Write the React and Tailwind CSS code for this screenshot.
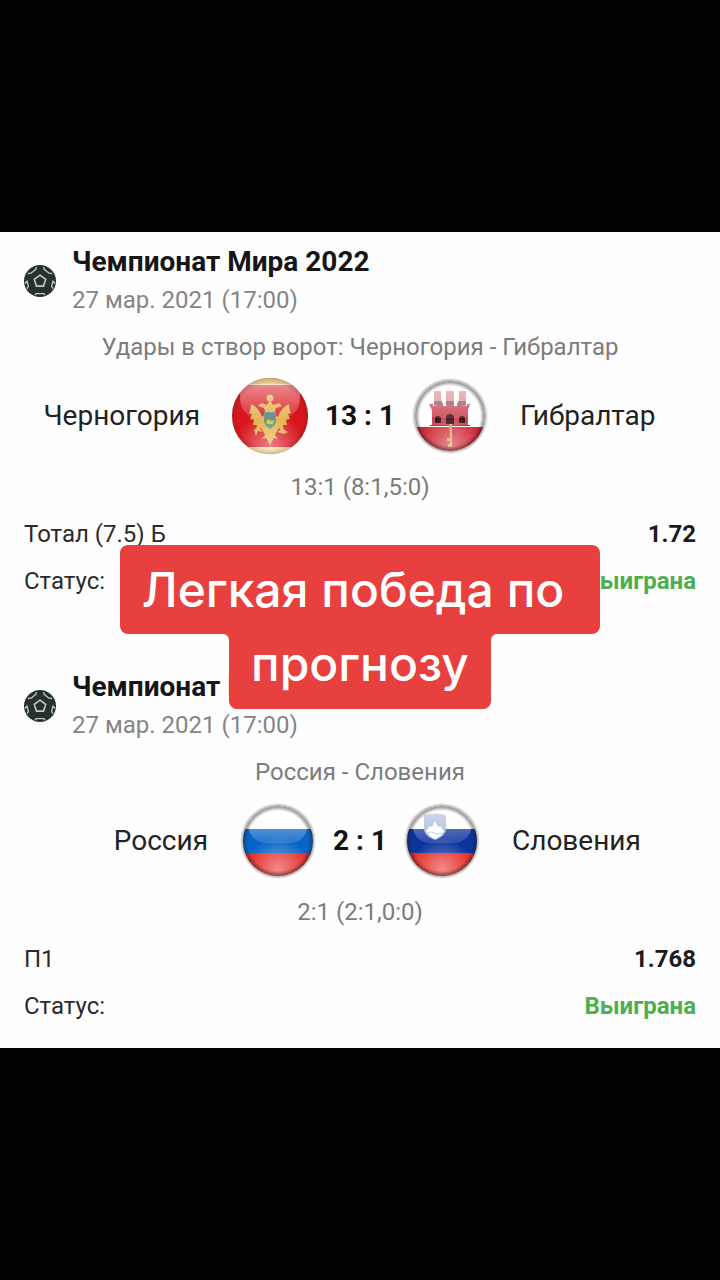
import React from 'react';

const matches = [
  {
    id: 1,
    league: 'Чемпионат Мира 2022',
    date: '27 мар. 2021 (17:00)',
    market: 'Удары в створ ворот: Черногория - Гибралтар',
    home: 'Черногория',
    away: 'Гибралтар',
    homeFlag: 'me',
    awayFlag: 'gi',
    score: '13 : 1',
    details: '13:1 (8:1,5:0)',
    bet: 'Тотал (7.5) Б',
    odds: '1.72',
    status: 'Выиграна',
  },
  {
    id: 2,
    league: 'Чемпионат Мира 2022',
    date: '27 мар. 2021 (17:00)',
    market: 'Россия - Словения',
    home: 'Россия',
    away: 'Словения',
    homeFlag: 'ru',
    awayFlag: 'si',
    score: '2 : 1',
    details: '2:1 (2:1,0:0)',
    bet: 'П1',
    odds: '1.768',
    status: 'Выиграна',
  },
];

const BallIcon = () => (
  <svg viewBox="0 0 32 32" className="w-8 h-8 shrink-0" aria-hidden="true">
    <circle cx="16" cy="16" r="16" fill="#25302f" />
    <g fill="none" stroke="#c3cbc9" strokeWidth="1.3">
      <path d="M16 10.2l5.7 4.2-2.2 6.7h-7l-2.2-6.7z" strokeWidth="1.6" />
      <path d="M4 8.5l3-.3 4.6-3.6.9-2.6M28 8.5l-3-.3-4.6-3.6-.9-2.6" />
      <path d="M1 18.5l2-2.3 1.4 5.2-1.4 2.2M31 18.5l-2-2.3-1.4 5.2 1.4 2.2" />
      <path d="M11 30l1.2-1.4h7.6L21 30" />
    </g>
  </svg>
);

const MontenegroFlag = () => (
  <>
    <rect width="80" height="80" fill="#d8161f" />
    <rect width="80" height="9" fill="#ead08c" />
    <rect y="71" width="80" height="9" fill="#f3dc8e" />
    <g fill="#e3b04a">
      <path d="M40 24l-3 5-6-2-3 3 6 2 2 6-4 3c-2-6-5-10-11-13 0 4-1 6-2 9l3 1-2 5 4 1-1 5 4 0-1 6 5-3 2 3 2 4-3 4 4-1 4 7 4-7 4 1-3-4 2-4 2-3 5 3-1-6 4 0-1-5 4-1-2-5 3-1c-1-3-2-5-2-9-6 3-9 7-11 13l-4-3 2-6 6-2-3-3-6 2z" />
      <circle cx="40" cy="22" r="3.5" />
      <path d="M24 54l4-3 5 5-5-1-2 5zM56 55l-4-3-5 4 7 2 4-2z" />
    </g>
    <path d="M34 36h12v8c0 5-3 7-6 9-3-2-6-4-6-9z" fill="#58936a" />
    <path d="M35 37h10v5H35z" fill="#54718d" />
    <path d="M36 45l3-2 2 2 3-1-1 4h-6z" fill="#d9b751" />
  </>
);

const GibraltarFlag = () => (
  <>
    <rect width="80" height="80" fill="#fff" />
    <rect y="51" width="80" height="29" fill="#cf2634" />
    <g fill="#cb3f4e">
      <path d="M24 15h7v15h-7zM36 15h8v15h-8zM49 15h7v15h-7z" fill="#dc8791" />
      <path d="M19 28h4v2h4v-3h6v3h4v-3h6v3h4v-3h6v3h4v-2h3l-2 6v15h2v1H20v-1h2V34z" />
    </g>
    <path d="M24 25h8v4h-8zM36 25h8v4h-8zM48 25h8v4h-8z" fill="#8d4f58" />
    <path d="M36 48v-6a4 4 0 018 0v6zM25 47v-4a3 3 0 016 0v4zM49 47v-4a3 3 0 016 0v4z" fill="#360a0e" />
    <path d="M20 49h40v1H20z" fill="#842731" />
    <path d="M39 48h3v23h-4v-3h2v-3h-3v-3h3z" fill="#dc9b55" />
  </>
);

const RussiaFlag = () => (
  <>
    <rect width="80" height="28" fill="#fff" />
    <rect y="28" width="80" height="24" fill="#0865c7" />
    <rect y="52" width="80" height="28" fill="#e62b27" />
  </>
);

const SloveniaFlag = () => (
  <>
    <rect width="80" height="28" fill="#fff" />
    <rect y="28" width="80" height="24" fill="#0b329d" />
    <rect y="52" width="80" height="28" fill="#e62b27" />
    <path d="M22 14q11-3 22 0v13c0 7-6 10-11 12-5-2-11-5-11-12z" fill="#a3b3d9" />
    <path d="M24 30l4-5 2 1 3-6 3 6 2-1 4 5c-2 4-5 6-9 8-4-2-7-4-9-8z" fill="#fff" />
    <path d="M25 32q4-2 8 0t8 0" fill="none" stroke="#b7c3e2" />
  </>
);

const flags = { me: MontenegroFlag, gi: GibraltarFlag, ru: RussiaFlag, si: SloveniaFlag };

const Flag = ({ code }) => {
  const Art = flags[code];
  const large = code === 'me';
  const r = large ? 38 : 35;
  return (
    <svg viewBox="0 0 80 80" className="w-20 h-20 shrink-0" aria-hidden="true">
      <defs>
        <clipPath id={`clip-${code}`}><circle cx="40" cy="40" r={r} /></clipPath>
        <linearGradient id={`gloss-${code}`} x1="0" y1="0" x2="0" y2="1">
          <stop offset="0" stopColor="#fff" stopOpacity=".5" />
          <stop offset="1" stopColor="#fff" stopOpacity=".12" />
        </linearGradient>
        <radialGradient id={`glow-${code}`} cx=".5" cy=".9" r=".45">
          <stop offset="0" stopColor="#fff" stopOpacity=".45" />
          <stop offset="1" stopColor="#fff" stopOpacity="0" />
        </radialGradient>
        <radialGradient id={`rim-${code}`}>
          <stop offset=".86" stopColor="#222" stopOpacity="0" />
          <stop offset="1" stopColor="#222" stopOpacity={large ? '.2' : '.55'} />
        </radialGradient>
        <radialGradient id={`shadow-${code}`}>
          <stop offset=".88" stopColor="#333" stopOpacity=".6" />
          <stop offset="1" stopColor="#333" stopOpacity="0" />
        </radialGradient>
      </defs>
      <circle cx="40" cy="40" r={large ? 39 : 38} fill={`url(#shadow-${code})`} />
      <g clipPath={`url(#clip-${code})`}>
        <Art />
        <path d="M10 8h60v14c0 12-8 20-18 20H28C18 42 10 34 10 22z" fill={`url(#gloss-${code})`} />
        <circle cx="40" cy="40" r={r} fill={`url(#glow-${code})`} />
        <circle cx="40" cy="40" r={r} fill={`url(#rim-${code})`} />
      </g>
    </svg>
  );
};

const Match = ({ match }) => (
  <section className="pt-[11px] pb-[18px] px-6">
    <header className="flex items-center gap-4">
      <BallIcon />
      <div>
        <h2 className="text-[28px] leading-[38px] font-bold text-[#151515]">{match.league}</h2>
        <p className="text-2xl leading-[38px] text-[#858585]">{match.date}</p>
      </div>
    </header>

    <p className="mt-[14px] text-center text-2xl leading-7 text-[#7c7c7c]">{match.market}</p>

    <div className="mt-[15px] grid grid-cols-[1fr_auto_1fr] items-center gap-[30px] text-[28px] text-[#222]">
      <span className="text-right">{match.home}</span>
      <div className="flex items-center gap-[15px]">
        <Flag code={match.homeFlag} />
        <strong className="font-bold text-[#111]">{match.score}</strong>
        <Flag code={match.awayFlag} />
      </div>
      <span>{match.away}</span>
    </div>

    <p className="mt-[17px] text-center text-2xl leading-7 text-[#7c7c7c]">{match.details}</p>

    <dl className="mt-[10px] text-2xl leading-[47px] text-[#2b2b2b]">
      <div className="flex justify-between">
        <dt>{match.bet}</dt>
        <dd className="font-bold text-[#1c1c1c]">{match.odds}</dd>
      </div>
      <div className="flex justify-between">
        <dt>Статус:</dt>
        <dd className="font-bold text-[#4caf50]">{match.status}</dd>
      </div>
    </dl>
  </section>
);

const Caption = () => (
  <div className="absolute inset-x-0 top-[313px] flex flex-col items-center font-[Inter,sans-serif] text-[48px] font-medium text-white">
    <p className="rounded-lg bg-[#e8403e] pl-[22px] pr-9 leading-[89px]">Легкая победа по</p>
    <div className="flex items-start">
      <svg viewBox="0 0 6 6" className="w-1.5 h-1.5" aria-hidden="true"><path d="M0 0h6v6a6 6 0 00-6-6z" fill="#e8403e" /></svg>
      <p className="rounded-b-lg bg-[#e8403e] px-[22px] pb-4 leading-[59px]">прогнозу</p>
      <svg viewBox="0 0 6 6" className="w-1.5 h-1.5" aria-hidden="true"><path d="M6 0H0v6a6 6 0 016-6z" fill="#e8403e" /></svg>
    </div>
  </div>
);

const App = () => {
  return (
    <div className="min-h-screen flex flex-col justify-center bg-black font-[Roboto,'Liberation_Sans',sans-serif]">
      <main className="relative flex flex-col gap-[34px] bg-[#fefefe]">
        {matches.map(m => <Match key={m.id} match={m} />)}
        <Caption />
      </main>
    </div>
  );
};

export default App;
